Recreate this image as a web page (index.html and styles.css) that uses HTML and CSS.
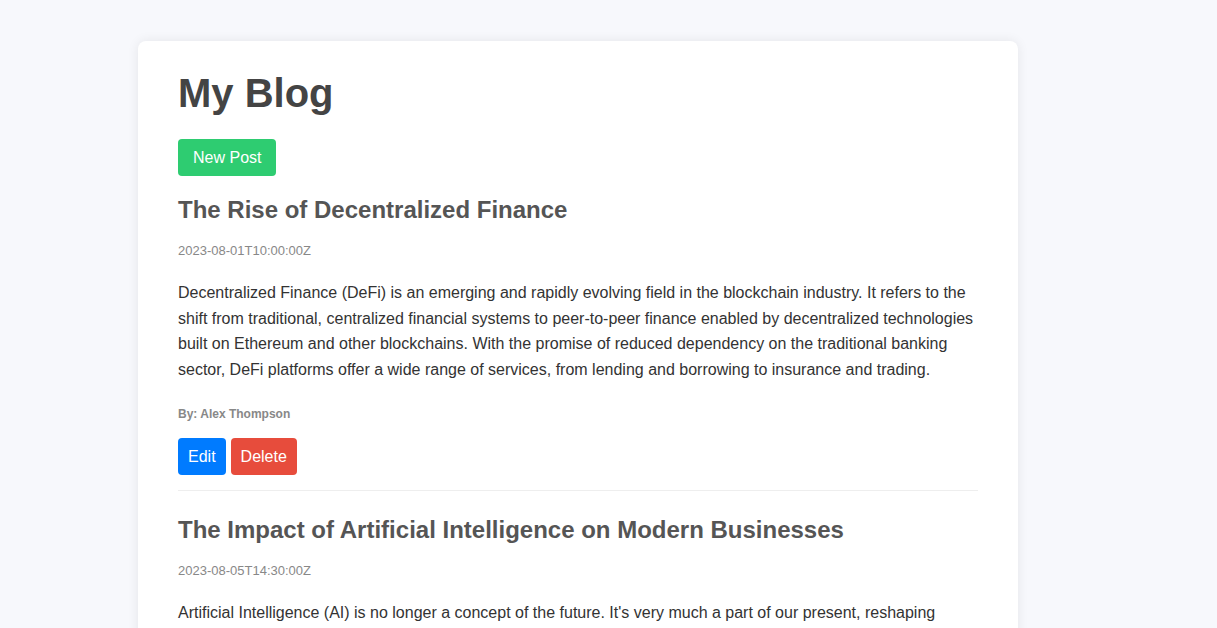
FILE: index.html
```html
<!DOCTYPE html>
<html lang="en">
<head>
<meta charset="utf-8">
<title>My Blog</title>
<link rel="stylesheet" href="styles.css">
</head>
<body>
<div class="container">
  <h1 class="page-title">My Blog</h1>
  <div class="toolbar">
    <button class="btn btn-new">New Post</button>
  </div>
  <div class="post">
    <h2 class="post-title">The Rise of Decentralized Finance</h2>
    <p class="post-date">2023-08-01T10:00:00Z</p>
    <p class="post-body">Decentralized Finance (DeFi) is an emerging and rapidly evolving field in the blockchain industry. It refers to the shift from traditional, centralized financial systems to peer-to-peer finance enabled by decentralized technologies built on Ethereum and other blockchains. With the promise of reduced dependency on the traditional banking sector, DeFi platforms offer a wide range of services, from lending and borrowing to insurance and trading.</p>
    <p class="post-author">By: Alex Thompson</p>
    <div class="actions">
      <button class="btn btn-edit">Edit</button>
      <button class="btn btn-delete">Delete</button>
    </div>
  </div>
  <div class="post">
    <h2 class="post-title">The Impact of Artificial Intelligence on Modern Businesses</h2>
    <p class="post-date">2023-08-05T14:30:00Z</p>
    <p class="post-body">Artificial Intelligence (AI) is no longer a concept of the future. It's very much a part of our present, reshaping industries and transforming the way businesses operate, make decisions and interact with their customers across the globe.</p>
    <p class="post-author">By: Sarah Mitchell</p>
    <div class="actions">
      <button class="btn btn-edit">Edit</button>
      <button class="btn btn-delete">Delete</button>
    </div>
  </div>
</div>
</body>
</html>
```
FILE: styles.css
```css
html, body {
  margin: 0;
  padding: 0;
}
body {
  background: #f7f8fc;
  font-family: "Liberation Sans", Arial, sans-serif;
  color: #333;
}
.container {
  width: 800px;
  margin: 41px 0 40px 138px;
  padding: 28px 40px 30px;
  background: #fff;
  border-radius: 8px;
  box-shadow: 0 0 12px rgba(0, 0, 0, 0.08);
}
.page-title {
  margin: 0 0 22px;
  font-size: 40px;
  line-height: 48px;
  font-weight: bold;
  color: #444;
}
.toolbar {
  display: flex;
  margin-bottom: 19px;
}
.btn {
  border: none;
  border-radius: 4px;
  color: #fff;
  font-family: "Liberation Sans", Arial, sans-serif;
  font-size: 16px;
  line-height: 17px;
  padding: 10px 10px;
  cursor: pointer;
}
.btn-new {
  background: #2ecc71;
  padding: 10px 15px;
}
.btn-edit {
  background: #007bff;
}
.btn-delete {
  background: #e74c3c;
}
.post {
  padding-bottom: 15px;
  border-bottom: 1px solid #eee;
  margin-bottom: 24px;
}
.post-title {
  margin: 0 0 18px;
  font-size: 24px;
  line-height: 30px;
  font-weight: bold;
  color: #555;
}
.post-date {
  margin: 0 0 21px;
  font-size: 13px;
  line-height: 16px;
  color: #888;
}
.post-body {
  margin: 0;
  font-size: 16px;
  line-height: 25.6px;
  color: #333;
}
.post-author {
  margin: 24px 0 16px;
  font-size: 12px;
  font-weight: bold;
  line-height: 16px;
  color: #888;
}
.actions {
  display: flex;
  gap: 5px;
}
```
